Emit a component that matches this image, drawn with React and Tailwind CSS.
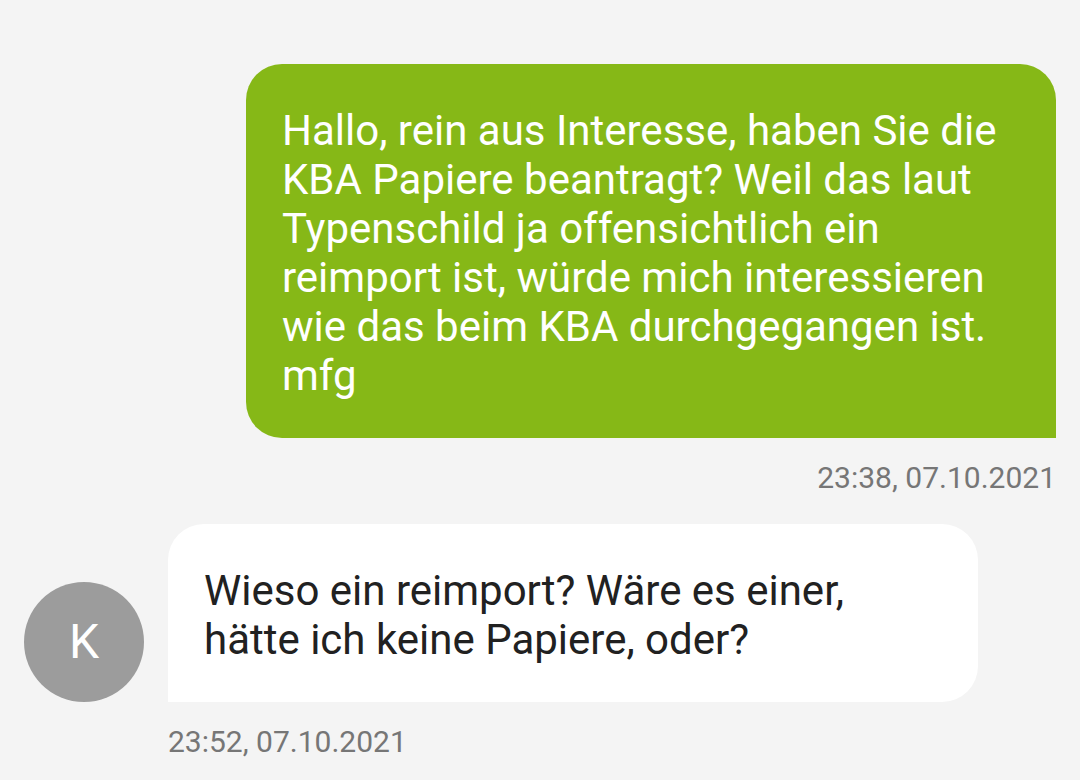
import React from "react";

const messages = [
    {
        id: 1,
        own: true,
        text: "Hallo, rein aus Interesse, haben Sie die KBA Papiere beantragt? Weil das laut Typenschild ja offensichtlich ein reimport ist, würde mich interessieren wie das beim KBA durchgegangen ist. mfg",
        time: "23:38, 07.10.2021"
    },
    {
        id: 2,
        own: false,
        initial: "K",
        text: "Wieso ein reimport? Wäre es einer, hätte ich keine Papiere, oder?",
        time: "23:52, 07.10.2021"
    }
];

const OwnMessage = ({text, time}) => (
    <li className="flex flex-col items-end pl-[222px]">
        <p className="w-full rounded-[36px] rounded-br-none bg-[#86b817] px-9 pt-[42px] pb-[38px] text-[42px] leading-[49px] text-white">
            {text}
        </p>
        <time className="mt-6 text-[30px] leading-8 text-[#767676]">{time}</time>
    </li>
);

const PartnerMessage = ({initial, text, time}) => (
    <li className="pr-[78px]">
        <div className="flex items-end gap-6">
            <div className="flex size-[120px] shrink-0 items-center justify-center rounded-full bg-[#9c9c9c] text-[48px] leading-[50px] text-white">
                {initial}
            </div>
            <p className="grow rounded-[36px] rounded-bl-none bg-white px-9 pt-[42px] pb-[38px] text-[42px] leading-[49px] text-[#212121]">
                {text}
            </p>
        </div>
        <time className="mt-6 ml-36 block text-[30px] leading-8 text-[#767676]">{time}</time>
    </li>
);

const App = () => (
    <main className="min-h-screen bg-[#f4f4f4] px-6 pt-16 font-['Roboto',sans-serif]">
        <ul className="flex flex-col gap-[30px]">
            {messages.map(({id, own, ...message}) => (
                own ? <OwnMessage key={id} {...message}/> : <PartnerMessage key={id} {...message}/>
            ))}
        </ul>
    </main>
);

export default App;
